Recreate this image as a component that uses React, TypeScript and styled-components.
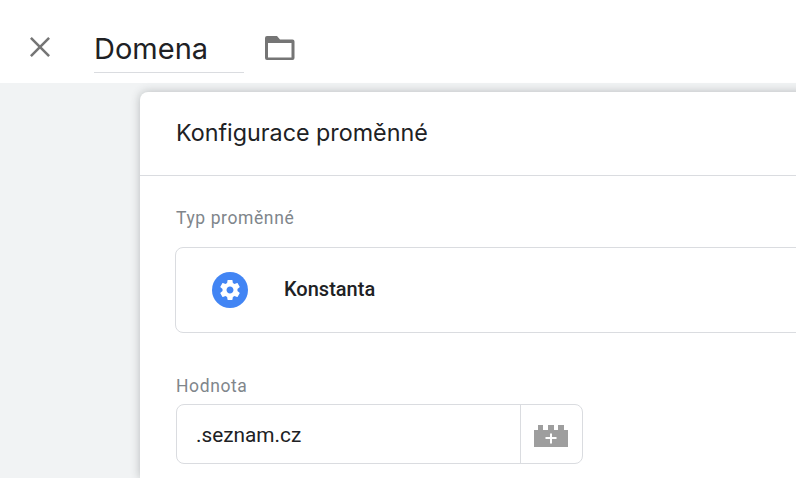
import React from 'react';
import styled, { createGlobalStyle } from 'styled-components';

const GlobalStyle = createGlobalStyle`
  html, body {
    margin: 0;
    padding: 0;
    height: 100%;
    overflow: hidden;
    background: #ffffff;
  }
`;

const Page = styled.div`
  width: 796px;
  height: 478px;
  overflow: hidden;
  display: flex;
  flex-direction: column;
  font-family: Roboto, "Liberation Sans", sans-serif;
`;

const TopBar = styled.header`
  height: 83px;
  flex-shrink: 0;
  background: #ffffff;
  display: flex;
  align-items: flex-start;
  padding: 33px 0 0 26px;
  box-sizing: border-box;
`;

const CloseButton = styled.button`
  width: 28px;
  height: 28px;
  padding: 0;
  border: 0;
  background: none;
  color: #757575;
  display: flex;
  align-items: center;
  justify-content: center;
`;

const NameField = styled.div`
  width: 150px;
  height: 40px;
  box-sizing: border-box;
  margin-left: 40px;
  border-bottom: 1px solid #dadce0;
  font-family: Inter, "Open Sans", sans-serif;
  font-size: 29px;
  line-height: 31px;
  color: #202124;
`;

const FolderButton = styled.button`
  width: 32px;
  height: 28px;
  margin: 1px 0 0 20px;
  padding: 0;
  border: 0;
  background: none;
  color: #757575;
  display: flex;
  align-items: center;
  justify-content: center;
`;

const Workspace = styled.main`
  flex: 1;
  background: #f1f3f4;
  padding: 9px 0 0 140px;
  display: flex;
  min-height: 0;
`;

const Card = styled.section`
  width: 720px;
  flex-shrink: 0;
  background: #ffffff;
  border-radius: 8px 0 0 0;
  box-shadow: 0 0 10px rgba(60, 64, 67, 0.32);
`;

const CardHeader = styled.div`
  height: 84px;
  box-sizing: border-box;
  border-bottom: 1px solid #dadce0;
  padding: 0 36px 2px;
  display: flex;
  align-items: center;
  font-family: Inter, "Open Sans", sans-serif;
  font-size: 23.3px;
  color: #202124;
`;

const CardBody = styled.div`
  padding: 32px 0 0 36px;
`;

const FieldLabel = styled.div`
  font-size: 17.5px;
  line-height: 20px;
  letter-spacing: 0.6px;
  color: #80868b;
`;

const TypeBox = styled.div`
  height: 86px;
  box-sizing: border-box;
  margin: 19px 0 0 -1px;
  border: 1px solid #dadce0;
  border-radius: 8px;
  display: flex;
  align-items: center;
  padding-left: 36px;
`;

const TypeIcon = styled.div`
  width: 36px;
  height: 36px;
  border-radius: 50%;
  background: #4285f4;
  color: #ffffff;
  display: flex;
  align-items: center;
  justify-content: center;
`;

const TypeName = styled.div`
  margin: 0 0 2px 36px;
  font-size: 20px;
  font-weight: 500;
  color: #202124;
`;

const ValueSection = styled.div`
  margin-top: 43px;
`;

const ValueGroup = styled.div`
  width: 407px;
  height: 60px;
  box-sizing: border-box;
  margin-top: 8px;
  border: 1px solid #dadce0;
  border-radius: 8px;
  display: flex;
`;

const ValueText = styled.div`
  flex: 1;
  padding: 1px 0 0 19px;
  display: flex;
  align-items: center;
  font-size: 20.8px;
  color: #202124;
`;

const VariableButton = styled.div`
  width: 62px;
  box-sizing: border-box;
  padding: 4px 1px 0 0;
  border-left: 1px solid #dadce0;
  display: flex;
  align-items: center;
  justify-content: center;
`;

const CloseIcon = () => (
  <svg width="24" height="24" viewBox="0 0 24 24" fill="currentColor">
    <path d="M22 3.8 20.2 2 12 10.2 3.8 2 2 3.8 10.2 12 2 20.2 3.8 22 12 13.8 20.2 22 22 20.2 13.8 12z" />
  </svg>
);

const FolderIcon = () => (
  <svg width="32" height="26" viewBox="0 0 32 26" fill="currentColor">
    <path d="M3 1h10l3 3.500h12.500a2 2 0 0 1 2 2V23a2 2 0 0 1-2 2H3a2 2 0 0 1-2-2V3a2 2 0 0 1 2-2zm1 7v14.500h23.500V8z" />
  </svg>
);

const GearIcon = () => (
  <svg width="24" height="24" viewBox="0 0 24 24" fill="currentColor">
    <path d="M19.43 12.98c.04-.32.07-.64.07-.98s-.03-.66-.07-.98l2.11-1.65c.19-.15.24-.42.12-.64l-2-3.46c-.12-.22-.39-.3-.61-.22l-2.49 1c-.52-.4-1.08-.73-1.69-.98l-.38-2.65C14.46 2.18 14.25 2 14 2h-4c-.25 0-.46.18-.49.42l-.38 2.65c-.61.25-1.17.59-1.69.98l-2.49-1c-.23-.09-.49 0-.61.22l-2 3.46c-.13.22-.07.49.12.64l2.11 1.65c-.04.32-.07.65-.07.98s.03.66.07.98l-2.11 1.65c-.19.15-.24.42-.12.64l2 3.46c.12.22.39.3.61.22l2.49-1c.52.4 1.08.73 1.69.98l.38 2.65c.03.24.24.42.49.42h4c.25 0 .46-.18.49-.42l.38-2.65c.61-.25 1.17-.59 1.69-.98l2.49 1c.23.09.49 0 .61-.22l2-3.46c.12-.22.07-.49-.12-.64l-2.11-1.65zM12 15.5c-1.93 0-3.5-1.57-3.5-3.5s1.57-3.5 3.5-3.5 3.5 1.57 3.5 3.5-1.57 3.5-3.5 3.5z" />
  </svg>
);

const BrickAddIcon = () => (
  <svg width="34" height="22" viewBox="0 0 34 22">
    <path
      fill="#9e9e9e"
      d="M0 5h4V0h5v5h5V0h6v5h4V0h6v5h4v17H0z"
    />
    <path fill="#ffffff" d="M16 8.500h2V12h4.500v2H18v4.500h-2V14h-4.500v-2H16z" />
  </svg>
);

export default function App() {
  return (
    <Page>
      <GlobalStyle />
      <TopBar>
        <CloseButton>
          <CloseIcon />
        </CloseButton>
        <NameField>Domena</NameField>
        <FolderButton>
          <FolderIcon />
        </FolderButton>
      </TopBar>
      <Workspace>
        <Card>
          <CardHeader>Konfigurace proměnné</CardHeader>
          <CardBody>
            <FieldLabel>Typ proměnné</FieldLabel>
            <TypeBox>
              <TypeIcon>
                <GearIcon />
              </TypeIcon>
              <TypeName>Konstanta</TypeName>
            </TypeBox>
            <ValueSection>
              <FieldLabel>Hodnota</FieldLabel>
              <ValueGroup>
                <ValueText>.seznam.cz</ValueText>
                <VariableButton>
                  <BrickAddIcon />
                </VariableButton>
              </ValueGroup>
            </ValueSection>
          </CardBody>
        </Card>
      </Workspace>
    </Page>
  );
}
